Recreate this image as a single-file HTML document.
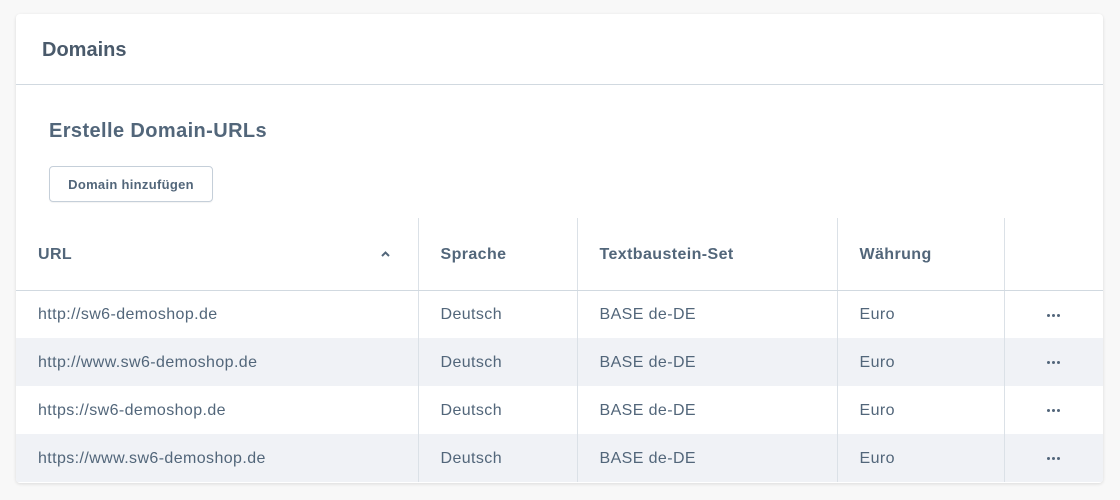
<!DOCTYPE html>
<html><head><style>
*{box-sizing:border-box;margin:0;padding:0}
body{width:1120px;height:500px;background:#f8f8f8;font-family:"Liberation Sans",sans-serif;color:#52667a;position:relative;overflow:hidden}
.card{position:absolute;left:16px;top:14px;width:1087px;height:469px;background:#fff;border-radius:4px;box-shadow:0 1px 3px rgba(0,0,0,.12);overflow:hidden}
.hd{height:71px;border-bottom:1px solid #d1d9e0;padding-left:26px;font-size:20px;font-weight:bold;line-height:73px;color:#4a5a6b}
h2{position:absolute;left:33px;top:106px;font-size:20px;letter-spacing:0.4px;color:#52667a}
.btn{position:absolute;left:33px;top:152px;width:164px;height:36px;border:1px solid #c5cfd9;border-radius:4px;font-size:13px;letter-spacing:0.3px;font-weight:bold;text-align:center;line-height:35px;color:#52667a;box-shadow:0 1px 1px rgba(0,0,0,.05)}
table{position:absolute;left:0;top:204px;width:1087px;border-collapse:collapse;font-size:16px;letter-spacing:0.4px}
th{height:72px;text-align:left;font-weight:bold;font-size:16px;color:#52667a;border-bottom:1px solid #d1d9e0;padding-top:3px}
td{height:48px;color:#52667a;padding-top:2px}
th,td{padding-left:22px;border-left:1px solid #dbe1e7}
th:first-child,td:first-child{border-left:none}
tr.s td{background:#f0f2f6}
.dots{text-align:center;padding-left:0}
.dots i{display:inline-block;width:3px;height:3px;border-radius:50%;background:#52667a;margin:0 1px;vertical-align:middle}
</style></head><body>
<div class="card">
<div class="hd">Domains</div>
<h2>Erstelle Domain-URLs</h2>
<div class="btn">Domain hinzufügen</div>
<table>
<colgroup><col style="width:402px"><col style="width:159px"><col style="width:260px"><col style="width:167px"><col></colgroup>
<tr><th>URL<svg style="float:right;margin:5px 28px 0 0" width="9" height="6" viewBox="0 0 9 6"><path d="M1 5L4.5 1.5L8 5" fill="none" stroke="#52667a" stroke-width="2"/></svg></th><th>Sprache</th><th>Textbaustein-Set</th><th>Währung</th><th></th></tr>
<tr><td>http://sw6-demoshop.de</td><td>Deutsch</td><td>BASE de-DE</td><td>Euro</td><td class="dots"><i></i><i></i><i></i></td></tr>
<tr class="s"><td>http://www.sw6-demoshop.de</td><td>Deutsch</td><td>BASE de-DE</td><td>Euro</td><td class="dots"><i></i><i></i><i></i></td></tr>
<tr><td>https://sw6-demoshop.de</td><td>Deutsch</td><td>BASE de-DE</td><td>Euro</td><td class="dots"><i></i><i></i><i></i></td></tr>
<tr class="s"><td>https://www.sw6-demoshop.de</td><td>Deutsch</td><td>BASE de-DE</td><td>Euro</td><td class="dots"><i></i><i></i><i></i></td></tr>
</table>
</div>
</body></html>
